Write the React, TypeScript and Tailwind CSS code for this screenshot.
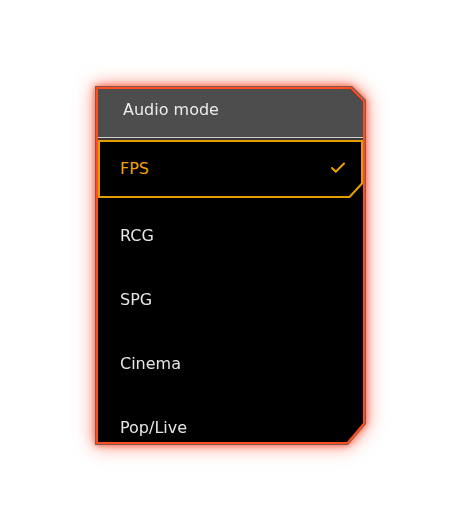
import { Check } from "lucide-react";

const modes = ["FPS", "RCG", "SPG", "Cinema", "Pop/Live"];

export default function App() {
  const selected = "FPS";

  return (
    <div className="flex min-h-[528px] w-[460px] items-start bg-white pl-[95px] pt-[86px] font-['DejaVu_Sans',sans-serif]">
      <div className="drop-shadow-[0_0_9px_rgba(255,110,85,0.8)]">
        <div className="drop-shadow-[0_0_3px_rgba(255,80,50,0.9)]">
          <div className="h-[359px] w-[271px] bg-[#7a5a52] p-px [clip-path:polygon(0_0,calc(100%_-_14px)_0,100%_14px,100%_calc(100%_-_21px),calc(100%_-_18px)_100%,0_100%)]">
            <div className="h-full w-full bg-[#ff4d1f] p-[2px] [clip-path:polygon(0_0,calc(100%_-_14px)_0,100%_14px,100%_calc(100%_-_20px),calc(100%_-_17px)_100%,0_100%)]">
              <div className="flex h-full w-full flex-col overflow-hidden bg-black [clip-path:polygon(0_0,calc(100%_-_13px)_0,100%_13px,100%_calc(100%_-_19px),calc(100%_-_16px)_100%,0_100%)]">
                <div className="flex h-[48px] shrink-0 items-center bg-[#4d4d4d] pb-[6px] pl-[25px] text-[16px] text-[#ececec]">
                  Audio mode
                </div>
                <div className="h-px shrink-0 bg-[#cfcfcf]" />
                <div className="h-[2px] shrink-0 bg-[#3a3a3a]" />

                {modes.map((mode) =>
                  mode === selected ? (
                    <div key={mode} className="h-16 shrink-0">
                      <div className="h-[58px] bg-[#e59c00] p-[2px] [clip-path:polygon(0_0,100%_0,100%_calc(100%_-_14px),calc(100%_-_13px)_100%,0_100%)]">
                        <div className="flex h-full items-center justify-between bg-black pl-[20px] pr-[14px] text-[16px] text-[#f2a200] [clip-path:polygon(0_0,100%_0,100%_calc(100%_-_13px),calc(100%_-_12px)_100%,0_100%)]">
                          <span>{mode}</span>
                          <Check size={18} strokeWidth={2.6} className="mb-[2px] text-[#f2a200]" />
                        </div>
                      </div>
                    </div>
                  ) : (
                    <div
                      key={mode}
                      className="flex h-16 shrink-0 items-center pl-[22px] text-[16px] text-[#e6e6e6]"
                    >
                      {mode}
                    </div>
                  )
                )}
              </div>
            </div>
          </div>
        </div>
      </div>
    </div>
  );
}
